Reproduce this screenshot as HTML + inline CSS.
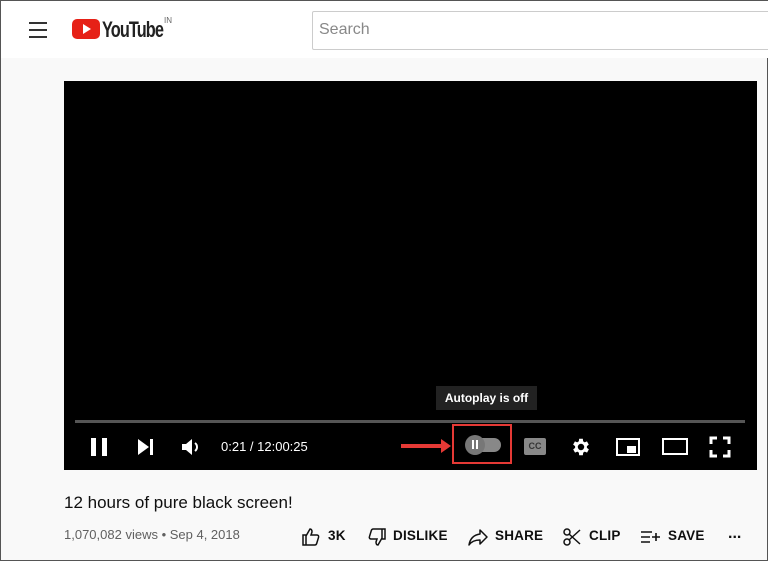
<!DOCTYPE html>
<html><head><meta charset="utf-8"><style>
*{margin:0;padding:0;box-sizing:border-box}
body{width:768px;height:561px;overflow:hidden;background:#f9f9f9;font-family:"Liberation Sans",Arial,sans-serif;position:relative;border:1px solid #555}
.hdr{position:absolute;left:0;top:0;width:768px;height:57px;background:#fff}
.abs{position:absolute}
.vid{position:absolute;left:63px;top:80px;width:693px;height:389px;background:#000}
.ctl{color:#fff}
.btn{position:absolute;font-size:13.5px;font-weight:bold;color:#0f0f0f;top:527px;letter-spacing:0.2px}
</style></head><body>
<div class="hdr">
 <div class="abs" style="left:28px;top:21px;width:18px;height:2px;background:#333"></div>
 <div class="abs" style="left:28px;top:28px;width:18px;height:2px;background:#333"></div>
 <div class="abs" style="left:28px;top:35px;width:18px;height:2px;background:#333"></div>
 <div class="abs" style="left:71px;top:18px;width:28px;height:20px;background:#e62117;border-radius:5px"></div>
 <div class="abs" style="left:82px;top:23px;width:0;height:0;border-left:8px solid #fff;border-top:5px solid transparent;border-bottom:5px solid transparent"></div>
 <div class="abs" style="left:101px;top:16px;font-size:22px;font-weight:bold;color:#222;letter-spacing:-1.2px;transform:scaleX(0.74);transform-origin:left">YouTube</div>
 <div class="abs" style="left:163px;top:15px;font-size:8px;color:#666">IN</div>
 <div class="abs" style="left:311px;top:10px;width:470px;height:39px;border:1px solid #ccc;border-radius:2px;background:#fff"></div>
 <div class="abs" style="left:318px;top:20px;font-size:16px;color:#888">Search</div>
</div>
<div class="vid"></div>
<div class="abs" style="left:435px;top:385px;width:101px;height:24px;background:#222;color:#fff;font-size:12px;font-weight:bold;line-height:24px;text-align:center">Autoplay is off</div>
<div class="abs" style="left:74px;top:419px;width:670px;height:3px;background:#555"></div>
<div class="abs" style="left:90px;top:437px;width:5px;height:18px;background:#fff"></div>
<div class="abs" style="left:101px;top:437px;width:5px;height:18px;background:#fff"></div>
<div class="abs" style="left:137px;top:438px;border-left:11px solid #fff;border-top:8px solid transparent;border-bottom:8px solid transparent"></div>
<div class="abs" style="left:149px;top:438px;width:3px;height:16px;background:#fff"></div>
<svg class="abs" style="left:180px;top:436px" width="22" height="20" viewBox="0 0 22 20"><path d="M1 7h4l6-5v16l-6-5H1z" fill="#fff"/><path d="M14 6a5 5 0 0 1 0 8" stroke="#fff" stroke-width="2" fill="none"/></svg>
<div class="abs ctl" style="left:220px;top:438px;font-size:13px">0:21 / 12:00:25</div>
<div class="abs" style="left:400px;top:443px;width:42px;height:4px;background:#e53935"></div>
<div class="abs" style="left:440px;top:438px;border-left:10px solid #e53935;border-top:7px solid transparent;border-bottom:7px solid transparent"></div>
<div class="abs" style="left:451px;top:423px;width:60px;height:40px;border:2px solid #e53935"></div>
<div class="abs" style="left:466px;top:437px;width:34px;height:14px;background:#888;border-radius:7px"></div>
<div class="abs" style="left:464px;top:434px;width:20px;height:20px;background:#777;border-radius:50%"></div>
<div class="abs" style="left:471px;top:439px;width:2px;height:9px;background:#fff"></div>
<div class="abs" style="left:475px;top:439px;width:2px;height:9px;background:#fff"></div>
<div class="abs" style="left:523px;top:437px;width:22px;height:17px;background:#888;border-radius:2px;color:#333;font-size:9px;font-weight:bold;text-align:center;line-height:17px">CC</div>
<svg class="abs" style="left:569px;top:435px" width="22" height="22" viewBox="0 0 24 24"><path fill="#fff" d="M19.4 13a7.5 7.5 0 0 0 0-2l2.1-1.6-2-3.5-2.5 1a7 7 0 0 0-1.7-1L15 3h-4l-.4 2.9a7 7 0 0 0-1.7 1l-2.5-1-2 3.5L6.6 11a7.5 7.5 0 0 0 0 2l-2.1 1.6 2 3.5 2.5-1a7 7 0 0 0 1.7 1L11 21h4l.4-2.9a7 7 0 0 0 1.7-1l2.5 1 2-3.5zM13 15.5a3.5 3.5 0 1 1 0-7 3.5 3.5 0 0 1 0 7z" transform="translate(-1 0)"/></svg>
<div class="abs" style="left:615px;top:437px;width:24px;height:18px;border:2px solid #fff"></div>
<div class="abs" style="left:626px;top:445px;width:9px;height:7px;background:#fff"></div>
<div class="abs" style="left:661px;top:437px;width:26px;height:17px;border:2px solid #fff"></div>
<svg class="abs" style="left:708px;top:435px" width="22" height="22" viewBox="0 0 22 22"><path d="M2 8V2h6M14 2h6v6M20 14v6h-6M8 20H2v-6" stroke="#fff" stroke-width="3" fill="none"/></svg>
<div class="abs" style="left:63px;top:492px;font-size:17px;color:#0f0f0f">12 hours of pure black screen!</div>
<div class="abs" style="left:63px;top:526px;font-size:13px;color:#606060">1,070,082 views • Sep 4, 2018</div>
<svg class="abs" style="left:300px;top:526px" width="20" height="20" viewBox="0 0 20 20"><path d="M2 8h3v10H2zM5 9l4-7c2 0 2 2 2 3l-1 3h6c1 0 2 1 1.6 2.2l-2 6.5c-.3.8-1 1.3-1.8 1.3H5" stroke="#111" stroke-width="1.5" fill="none"/></svg>
<div class="btn" style="left:327px">3K</div>
<svg class="abs" style="left:366px;top:526px" width="20" height="20" viewBox="0 0 20 20"><path d="M18 12h-3V2h3zM15 11l-4 7c-2 0-2-2-2-3l1-3H4c-1 0-2-1-1.6-2.2l2-6.5C4.7 2.5 5.4 2 6.2 2H15" stroke="#111" stroke-width="1.5" fill="none"/></svg>
<div class="btn" style="left:392px">DISLIKE</div>
<svg class="abs" style="left:466px;top:526px" width="22" height="20" viewBox="0 0 22 20"><path d="M13 3l7 7-7 7v-4C7 13 4 15 2 18c1-6 4-10 11-11z" stroke="#111" stroke-width="1.5" fill="none" stroke-linejoin="round"/></svg>
<div class="btn" style="left:494px">SHARE</div>
<svg class="abs" style="left:561px;top:526px" width="20" height="20" viewBox="0 0 20 20"><circle cx="5" cy="5" r="3" stroke="#111" stroke-width="1.5" fill="none"/><circle cx="5" cy="15" r="3" stroke="#111" stroke-width="1.5" fill="none"/><path d="M7 7l11 10M7 13L18 3" stroke="#111" stroke-width="1.5"/></svg>
<div class="btn" style="left:588px">CLIP</div>
<svg class="abs" style="left:639px;top:527px" width="22" height="18" viewBox="0 0 22 18"><path d="M1 4h11M1 9h9M1 14h9M12 9h8M16 5v8" stroke="#111" stroke-width="1.6"/></svg>
<div class="btn" style="left:667px">SAVE</div>
<div class="abs" style="left:727px;top:524px;font-size:16px;font-weight:bold;color:#111">...</div>
</body></html>
